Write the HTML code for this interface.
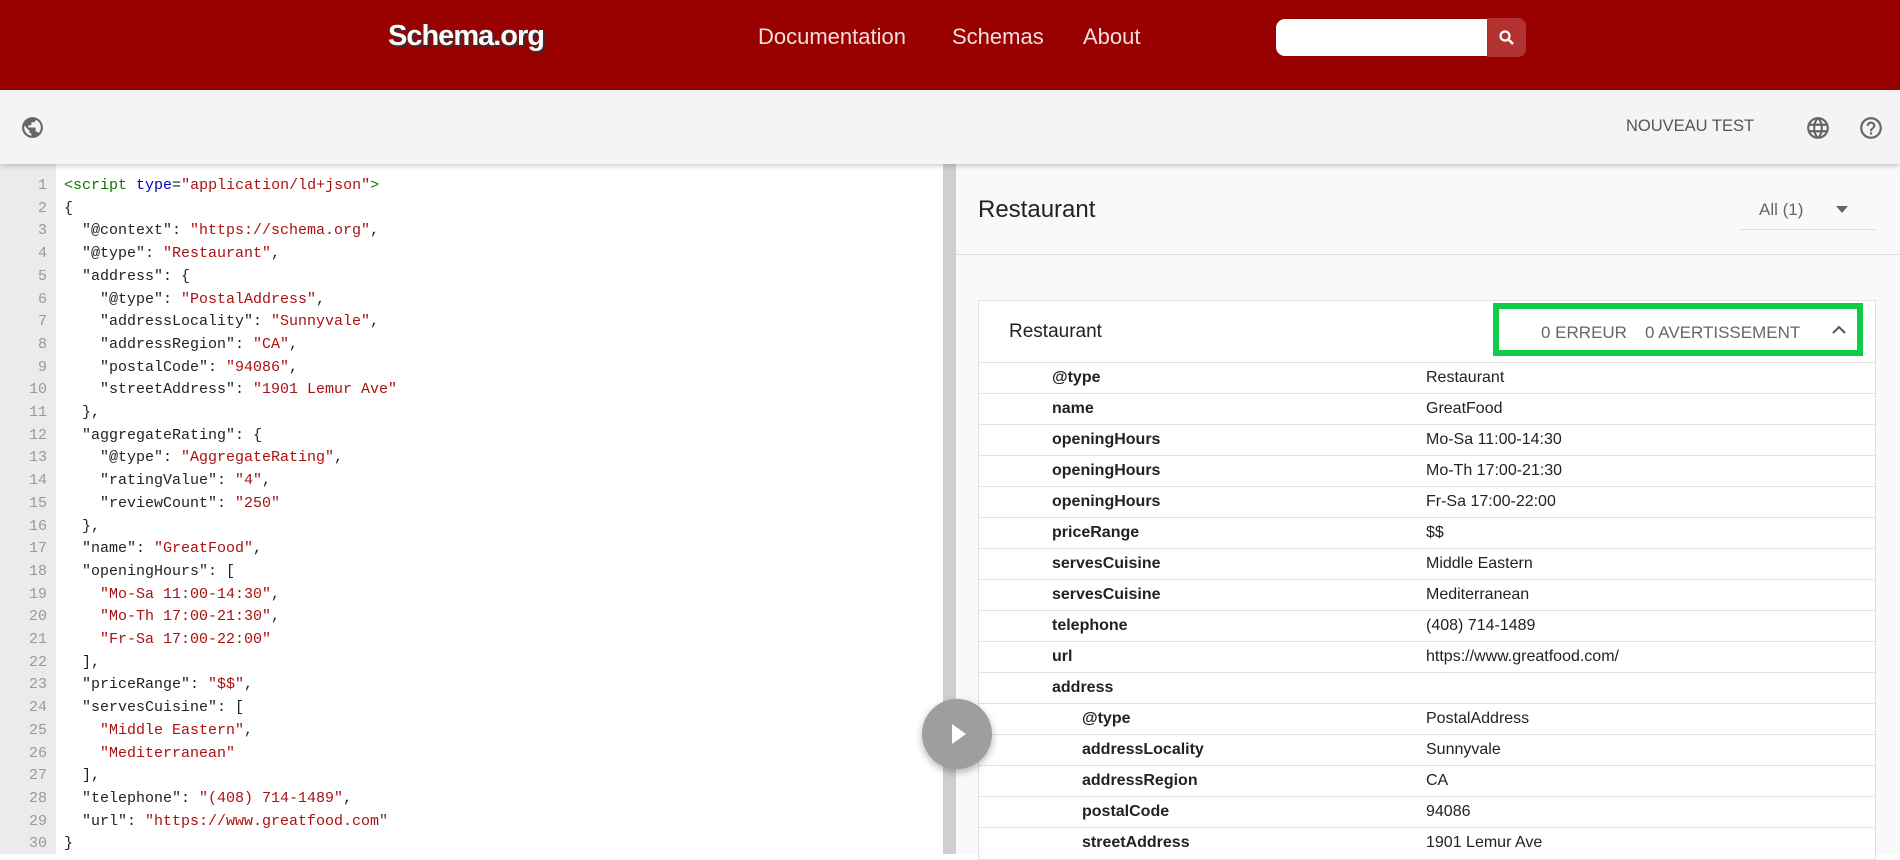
<!DOCTYPE html>
<html><head><meta charset="utf-8"><style>
*{box-sizing:border-box;margin:0;padding:0}
body{width:1900px;height:854px;overflow:hidden;font-family:"Liberation Sans",sans-serif;background:#fff;position:relative}
.hdr{position:absolute;left:0;top:0;width:1900px;height:90px;background:#990000}
.logo{position:absolute;left:388px;top:20px;font-size:29px;font-weight:bold;color:#fff;text-shadow:2px 2px 2px #333;letter-spacing:-1px}
.nav{position:absolute;top:24px;font-size:22px;color:#f2dede}
.search{position:absolute;left:1276px;top:19px;width:212px;height:37px;background:#fff;border-radius:9px 0 0 9px}
.sbtn{position:absolute;left:1487px;top:18px;width:39px;height:39px;background:#b23131;border-radius:0 8px 8px 0}
.tb{position:absolute;left:0;top:90px;width:1900px;height:74px;background:#f4f4f4;box-shadow:0 2px 5px rgba(0,0,0,.2);z-index:2}
.code{position:absolute;left:0;top:164px;width:943px;height:690px;background:#fff}
.gut{position:absolute;left:0;top:164px;width:56px;height:690px;background:#ebebeb}
.ln{position:absolute;left:0;width:47px;text-align:right;font:15px "Liberation Mono",monospace;color:#999}
.cl{position:absolute;left:64px;font:15px "Liberation Mono",monospace;color:#222;white-space:pre}
.s{color:#a11}.t{color:#170}.a{color:#00c}
.div{position:absolute;left:943px;top:164px;width:13px;height:690px;background:#cfcfcf}
.rp{position:absolute;left:956px;top:164px;width:944px;height:690px;background:#f9f9f9}
.card{position:absolute;left:978px;top:300px;width:898px;height:560px;background:#fff;border:1px solid #e0e0e0}
.row{position:absolute;left:0;width:896px;height:31px;border-top:1px solid #e2e2e2;font-size:16px;color:#222}
.k{position:absolute;left:73px;top:6px;font-weight:bold}
.k2{left:103px}
.v{position:absolute;left:447px;top:6px}
</style></head><body>
<div class="hdr">
<div class="logo">Schema.org</div>
<div class="nav" style="left:758px">Documentation</div>
<div class="nav" style="left:952px">Schemas</div>
<div class="nav" style="left:1083px">About</div>
<div class="search"></div>
<div class="sbtn"><svg width="39" height="39" viewBox="0 0 39 39"><circle cx="18" cy="18" r="4.5" fill="none" stroke="#fff" stroke-width="2.2"/><path d="M21 21l5 5" stroke="#fff" stroke-width="2.5"/></svg></div>
</div>
<div class="tb">
<svg style="position:absolute;left:20px;top:25px" width="25" height="25" viewBox="0 0 24 24"><path fill="#666" d="M12 2C6.48 2 2 6.48 2 12s4.480 10 10 10 10-4.48 10-10S17.52 2 12 2zm-1 17.930c-3.95-.49-7-3.85-7-7.930 0-.62.08-1.21.21-1.79L9 15v1c0 1.1.9 2 2 2v1.93zm6.9-2.540c-.26-.81-1-1.39-1.9-1.39h-1v-3c0-.55-.45-1-1-1H8v-2h2c.55 0 1-.45 1-1V7h2c1.1 0 2-.9 2-2v-.41c2.93 1.19 5 4.06 5 7.41 0 2.08-.8 3.97-2.1 5.39z"/></svg>
<div style="position:absolute;left:1626px;top:27px;font-size:16.5px;color:#555">NOUVEAU TEST</div>
<svg style="position:absolute;left:1805px;top:25px" width="26" height="26" viewBox="0 0 24 24"><path fill="#666" d="M11.99 2C6.47 2 2 6.48 2 12s4.47 10 9.99 10C17.52 22 22 17.52 22 12S17.52 2 11.99 2zm6.93 6h-2.95c-.32-1.25-.78-2.45-1.38-3.56 1.84.63 3.37 1.91 4.33 3.56zM12 4.04c.83 1.2 1.48 2.53 1.91 3.96h-3.82c.43-1.43 1.08-2.76 1.910-3.96zM4.26 14C4.1 13.36 4 12.69 4 12s.1-1.36.26-2h3.38c-.08.66-.14 1.32-.14 2 0 .68.06 1.34.14 2H4.26zm.82 2h2.95c.32 1.25.78 2.45 1.38 3.56-1.84-.63-3.37-1.9-4.33-3.56zm2.95-8H5.08c.96-1.66 2.49-2.93 4.33-3.56C8.81 5.55 8.35 6.75 8.03 8zM12 19.96c-.83-1.2-1.48-2.53-1.91-3.96h3.82c-.43 1.43-1.08 2.76-1.91 3.96zM14.34 14H9.66c-.09-.66-.16-1.32-.16-2 0-.68.07-1.35.16-2h4.68c.09.65.16 1.32.16 2 0 .68-.07 1.34-.16 2zm.25 5.56c.6-1.11 1.06-2.31 1.38-3.56h2.95c-.96 1.65-2.49 2.93-4.33 3.56zM16.36 14c.08-.66.14-1.32.14-2 0-.68-.06-1.34-.14-2h3.38c.16.64.26 1.31.26 2s-.1 1.36-.26 2h-3.38z"/></svg>
<svg style="position:absolute;left:1858px;top:25px" width="26" height="26" viewBox="0 0 24 24"><path fill="#666" d="M11 18h2v-2h-2v2zm1-16C6.48 2 2 6.48 2 12s4.48 10 10 10 10-4.48 10-10S17.52 2 12 2zm0 18c-4.41 0-8-3.59-8-8s3.59-8 8-8 8 3.59 8 8-3.59 8-8 8zm0-14c-2.21 0-4 1.79-4 4h2c0-1.1.9-2 2-2s2 .9 2 2c0 2-3 1.75-3 5h2c0-2.25 3-2.5 3-5 0-2.21-1.79-4-4-4z"/></svg>
</div>
<div class="code"></div><div class="gut"></div>
<div id="codewrap"></div>
<div class="div"></div>
<div class="rp">
<div style="position:absolute;left:22px;top:32px;font-size:24px;color:#222">Restaurant</div>
<div style="position:absolute;left:803px;top:36px;font-size:17px;color:#666">All (1)</div>
<svg style="position:absolute;left:880px;top:42px" width="12" height="8"><path d="M0 0h12L6 7z" fill="#666"/></svg>
<div style="position:absolute;left:784px;top:65px;width:136px;height:1px;background:#ddd"></div>
<div style="position:absolute;left:0;top:90px;width:944px;height:1px;background:#e0e0e0"></div>
</div>
<div class="card">
<div style="position:absolute;left:30px;top:20px;font-size:19px;color:#222">Restaurant</div>
<div style="position:absolute;left:514px;top:2px;width:370px;height:53px;border:6px solid #12cc48"></div>
<div style="position:absolute;left:562px;top:22px;font-size:17px;color:#666">0 ERREUR</div>
<div style="position:absolute;left:666px;top:22px;font-size:17px;color:#666">0 AVERTISSEMENT</div>
<svg style="position:absolute;left:853px;top:24px" width="14" height="10"><path d="M1 8l6-6 6 6" fill="none" stroke="#555" stroke-width="2"/></svg>
<div id="rows"></div>
</div>
<div style="position:absolute;left:922px;top:699px;width:70px;height:70px;border-radius:50%;background:#9e9e9e;box-shadow:0 3px 8px rgba(0,0,0,.3)"><svg width="70" height="70"><path d="M30 25v20l14-10z" fill="#fff"/></svg></div>
<script>
var L=['<span class="t">&lt;script</span> <span class="a">type</span>=<span class="s">"application/ld+json"</span><span class="t">&gt;</span>','{',
'  "@context": <span class="s">"https://schema.org"</span>,','  "@type": <span class="s">"Restaurant"</span>,','  "address": {',
'    "@type": <span class="s">"PostalAddress"</span>,','    "addressLocality": <span class="s">"Sunnyvale"</span>,','    "addressRegion": <span class="s">"CA"</span>,',
'    "postalCode": <span class="s">"94086"</span>,','    "streetAddress": <span class="s">"1901 Lemur Ave"</span>','  },','  "aggregateRating": {',
'    "@type": <span class="s">"AggregateRating"</span>,','    "ratingValue": <span class="s">"4"</span>,','    "reviewCount": <span class="s">"250"</span>','  },',
'  "name": <span class="s">"GreatFood"</span>,','  "openingHours": [','    <span class="s">"Mo-Sa 11:00-14:30"</span>,','    <span class="s">"Mo-Th 17:00-21:30"</span>,',
'    <span class="s">"Fr-Sa 17:00-22:00"</span>','  ],','  "priceRange": <span class="s">"$$"</span>,','  "servesCuisine": [','    <span class="s">"Middle Eastern"</span>,',
'    <span class="s">"Mediterranean"</span>','  ],','  "telephone": <span class="s">"(408) 714-1489"</span>,','  "url": <span class="s">"https://www.greatfood.com"</span>','}'];
var h='';for(var i=0;i<L.length;i++){var y=177+i*22.7;h+='<div class="ln" style="top:'+y+'px">'+(i+1)+'</div><div class="cl" style="top:'+y+'px">'+L[i]+'</div>';}
document.getElementById('codewrap').innerHTML=h;
var R=[['@type','Restaurant'],['name','GreatFood'],['openingHours','Mo-Sa 11:00-14:30'],['openingHours','Mo-Th 17:00-21:30'],['openingHours','Fr-Sa 17:00-22:00'],['priceRange','$$'],['servesCuisine','Middle Eastern'],['servesCuisine','Mediterranean'],['telephone','(408) 714-1489'],['url','https://www.greatfood.com/'],['address',''],['@type','PostalAddress',1],['addressLocality','Sunnyvale',1],['addressRegion','CA',1],['postalCode','94086',1],['streetAddress','1901 Lemur Ave',1]];
h='';for(i=0;i<R.length;i++){h+='<div class="row" style="top:'+(61+i*31)+'px"><span class="k'+(R[i][2]?' k2':'')+'">'+R[i][0]+'</span><span class="v">'+R[i][1]+'</span></div>';}
document.getElementById('rows').innerHTML=h;
</script>
</body></html>
